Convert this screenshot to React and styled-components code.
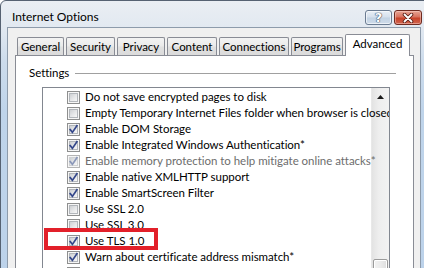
import React from 'react'
import styled, { createGlobalStyle } from 'styled-components'

const GlobalStyle = createGlobalStyle`
  html, body {
    margin: 0;
    padding: 0;
    background: #ffffff;
    overflow: hidden;
  }
  body {
    font-family: Lato, "Liberation Sans", sans-serif;
    font-size: 11.5px;
    letter-spacing: -0.04px;
    color: #000;
  }
`

const tabs = [
  { label: 'General', width: 47 },
  { label: 'Security', width: 49 },
  { label: 'Privacy', width: 48 },
  { label: 'Content', width: 50 },
  { label: 'Connections', width: 70 },
  { label: 'Programs', width: 52 },
  { label: 'Advanced', width: 65, active: true },
]

const settings = [
  { label: 'Do not save encrypted pages to disk' },
  { label: 'Empty Temporary Internet Files folder when browser is closed' },
  { label: 'Enable DOM Storage', checked: true },
  { label: 'Enable Integrated Windows Authentication*', checked: true },
  { label: 'Enable memory protection to help mitigate online attacks*', checked: true, disabled: true },
  { label: 'Enable native XMLHTTP support', checked: true },
  { label: 'Enable SmartScreen Filter', checked: true },
  { label: 'Use SSL 2.0' },
  { label: 'Use SSL 3.0' },
  { label: 'Use TLS 1.0', checked: true, marked: true },
  { label: 'Warn about certificate address mismatch*', checked: true },
  { label: 'Warn if changing between secure and not secure mode', checked: true },
]

function Checkbox({ checked, disabled }) {
  return (
    <Box $disabled={disabled}>
      <BoxInner $disabled={disabled} />
      {checked && (
        <CheckMark viewBox="0 0 13 13" width="13" height="13">
          <path
            d="M3.2 6.6 L5.4 9.4 L9.9 2.8"
            fill="none"
            stroke={disabled ? '#8a97b8' : '#34478a'}
            strokeWidth="1.7"
            strokeLinecap="square"
            strokeLinejoin="miter"
          />
        </CheckMark>
      )}
    </Box>
  )
}

function App() {
  return (
    <>
      <GlobalStyle />
      <Window>
        <TitleBar>
          <Title>Internet Options</Title>
          <CaptionButtons>
            <HelpButton>?</HelpButton>
            <CloseButton>
              <svg width="14" height="10" viewBox="0 0 14 10">
                <path d="M3.5 1.5 L10.5 8.5 M10.5 1.5 L3.5 8.5" stroke="#5b1f17" strokeWidth="3.6" strokeLinecap="round" />
                <path d="M3.5 1.5 L10.5 8.5 M10.5 1.5 L3.5 8.5" stroke="#ffffff" strokeWidth="1.8" strokeLinecap="round" />
              </svg>
            </CloseButton>
          </CaptionButtons>
        </TitleBar>
        <Client>
          <TabStrip>
            {tabs.map((t) => (
              <Tab key={t.label} $width={t.width} $active={t.active}>
                {t.label}
              </Tab>
            ))}
          </TabStrip>
          <Panel>
            <GroupHeader>
              <GroupLabel>Settings</GroupLabel>
              <GroupLine />
            </GroupHeader>
            <ListBox>
              <Items>
                {settings.map((s) => (
                  <Row key={s.label} $disabled={s.disabled}>
                    <Checkbox checked={s.checked} disabled={s.disabled} />
                    <RowText>{s.label}</RowText>
                    {s.marked && <Highlight />}
                  </Row>
                ))}
              </Items>
              <ScrollBar>
                <ArrowButton>
                  <svg width="7" height="4" viewBox="0 0 7 4">
                    <path d="M0 4 L3.5 0 L7 4 Z" fill="#1a1a1a" />
                  </svg>
                </ArrowButton>
                <Thumb />
              </ScrollBar>
            </ListBox>
          </Panel>
        </Client>
      </Window>
    </>
  )
}

export default App

const Window = styled.div`
  width: 432px;
  height: 300px;
  box-sizing: border-box;
  display: flex;
  flex-direction: column;
  padding: 0 10px 0 6px;
  border: 1px solid #566272;
  border-radius: 6px 6px 0 0;
  background: linear-gradient(to bottom, #eaeef3 0px, #e2e9f1 26px, #cddcec 60px, #bfd4ea 110px, #bcd2ea 100%);
`

const TitleBar = styled.div`
  height: 27px;
  box-sizing: border-box;
  padding-top: 9px;
  display: flex;
  align-items: flex-start;
  justify-content: space-between;
`

const Title = styled.div`
  margin-left: 5px;
  line-height: 14px;
  font-size: 12px;
  color: #000;
`

const CaptionButtons = styled.div`
  display: flex;
  gap: 2px;
  margin-right: -1px;
`

const HelpButton = styled.div`
  width: 27px;
  height: 15px;
  box-sizing: border-box;
  border: 1px solid #6a7b91;
  border-radius: 3px;
  background: linear-gradient(to bottom, #e9eff6 0%, #d5e0ec 48%, #c2d2e3 52%, #cfdcea 100%);
  box-shadow: inset 0 0 0 1px rgba(255, 255, 255, 0.6);
  display: flex;
  align-items: center;
  justify-content: center;
  font-family: "DejaVu Sans", sans-serif;
  font-weight: bold;
  font-size: 13px;
  line-height: 1;
  color: #ffffff;
  text-shadow: 0 0 1px #3b4a60, 0 0 1px #3b4a60, 0 0 1px #3b4a60;
`

const CloseButton = styled.div`
  width: 28px;
  height: 15px;
  box-sizing: border-box;
  border: 1px solid #6e2a20;
  border-radius: 3px;
  background: linear-gradient(to bottom, #e8a596 0%, #d8735f 45%, #c8432a 55%, #d0654f 100%);
  box-shadow: inset 0 0 0 1px rgba(255, 220, 210, 0.45);
  display: flex;
  align-items: center;
  justify-content: center;
`

const Client = styled.div`
  flex: 1;
  display: flex;
  flex-direction: column;
  border: 1px solid #8d9bab;
  border-bottom: none;
  background: #f0f0f0;
  padding: 6px 6px 0 7px;
`

const TabStrip = styled.div`
  height: 21px;
  display: flex;
  align-items: flex-end;
  gap: 2px;
  padding-left: 2px;
  position: relative;
  z-index: 1;
`

const Tab = styled.div`
  width: ${(p) => p.$width}px;
  height: ${(p) => (p.$active ? 22 : 18)}px;
  margin-bottom: ${(p) => (p.$active ? -1 : 0)}px;
  box-sizing: border-box;
  border: 1px solid #898c95;
  border-bottom: none;
  border-radius: 2px 2px 0 0;
  background: ${(p) =>
    p.$active
      ? '#ffffff'
      : 'linear-gradient(to bottom, #f3f3f3 0%, #ebebeb 45%, #e0e0e0 55%, #dbdbdb 100%)'};
  display: flex;
  align-items: center;
  justify-content: center;
  padding-bottom: ${(p) => (p.$active ? 4 : 0)}px;
  line-height: 14px;
  color: #000;
`

const Panel = styled.div`
  flex: 1;
  display: flex;
  flex-direction: column;
  background: #ffffff;
  border: 1px solid #898c95;
  border-bottom: none;
  padding: 10px 17px 0 13px;
`

const GroupHeader = styled.div`
  display: flex;
  align-items: center;
  height: 14px;
`

const GroupLabel = styled.span`
  line-height: 14px;
`

const GroupLine = styled.div`
  flex: 1;
  height: 1px;
  margin-left: 6px;
  background: #a0a0a0;
`

const ListBox = styled.div`
  flex: 1;
  display: flex;
  margin: 7px 6px 0 13px;
  border: 1px solid #828790;
  border-bottom: none;
  overflow: hidden;
`

const Items = styled.div`
  flex: 1;
  min-width: 0;
  padding-top: 1px;
`

const Row = styled.div`
  position: relative;
  height: 16px;
  display: flex;
  align-items: center;
  padding-left: 24px;
  color: ${(p) => (p.$disabled ? '#6d6d6d' : '#000')};
`

const RowText = styled.span`
  margin-left: 5px;
  white-space: nowrap;
  line-height: 14px;
`

const Highlight = styled.div`
  position: absolute;
  left: 1px;
  top: -5px;
  width: 114px;
  height: 22px;
  box-sizing: border-box;
  border: 4px solid #e2202a;
  z-index: 2;
`

const Box = styled.span`
  position: relative;
  flex: none;
  width: 13px;
  height: 13px;
  box-sizing: border-box;
  border: 1px solid ${(p) => (p.$disabled ? '#b4b4b4' : '#8e8f8f')};
  background: #f6f6f6;
  padding: 1px;
  display: flex;
`

const BoxInner = styled.span`
  flex: 1;
  border: 1px solid ${(p) => (p.$disabled ? '#cfd1d3' : '#b2b6bb')};
  background: linear-gradient(135deg, #cdd0d3 0%, #e4e5e7 50%, #f7f7f7 100%);
`

const CheckMark = styled.svg`
  position: absolute;
  left: -1px;
  top: -1px;
`

const ScrollBar = styled.div`
  width: 17px;
  flex: none;
  display: flex;
  flex-direction: column;
  background: linear-gradient(to right, #e3e3e3 0%, #eeeeee 40%, #f2f2f2 100%);
  border-left: 1px solid #e8e8e8;
`

const ArrowButton = styled.div`
  height: 17px;
  display: flex;
  align-items: center;
  justify-content: center;
`

const Thumb = styled.div`
  margin: 154px 1px 0 1px;
  height: 40px;
  box-sizing: border-box;
  border: 1px solid #9a9a9a;
  border-radius: 2px;
  background: linear-gradient(to right, #f2f2f2 0%, #ebebeb 50%, #dedede 100%);
  box-shadow: inset 0 0 0 1px #ffffff;
`
